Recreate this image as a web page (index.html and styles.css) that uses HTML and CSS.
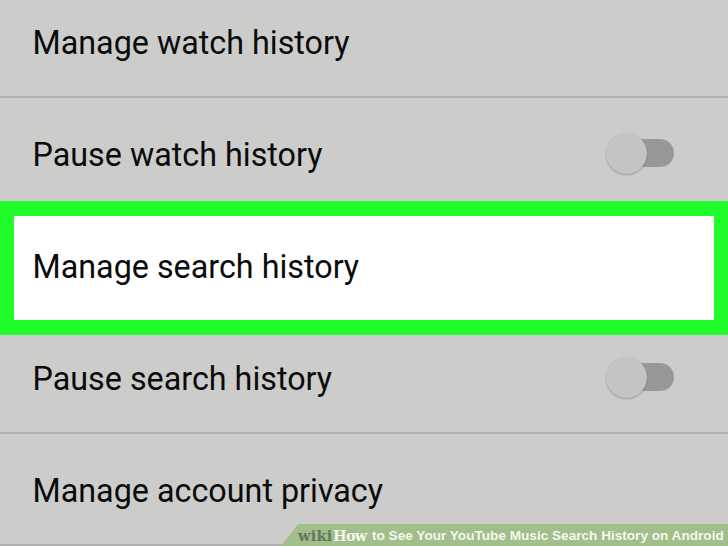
FILE: index.html
```html
<!DOCTYPE html>
<html lang="en">
<head>
    <meta charset="UTF-8">
    <meta name="viewport" content="width=device-width, initial-scale=1">
    <title>History settings</title>
    <link rel="stylesheet" href="styles.css">
</head>
<body>
    <main class="settings">
        <div class="row row-first"><span class="label">Manage watch history</span></div>
        <div class="row row-pause">
            <span class="label">Pause watch history</span>
            <span class="toggle"><span class="knob"></span></span>
        </div>
        <!-- Highlighted option -->
        <div class="row row-active"><span class="label">Manage search history</span></div>
        <div class="row row-pause-search">
            <span class="label">Pause search history</span>
            <span class="toggle"><span class="knob"></span></span>
        </div>
        <div class="row row-last"><span class="label">Manage account privacy</span></div>
    </main>
    <footer class="caption">
        <span class="wiki">wiki</span><span class="how">How</span>
        <span class="caption-text">to See Your YouTube Music Search History on Android</span>
    </footer>
</body>
</html>
```

FILE: styles.css
```css
body {
    margin: 0;
    height: 546px;
    overflow: hidden;
    position: relative;
    background: #cccccb;
    font-family: Roboto, sans-serif;
    color: #0b0b0b;
}

.row {
    box-sizing: border-box;
    display: flex;
    align-items: flex-start;
    justify-content: space-between;
    padding: 0 54px 0 32.5px;
}

.label {
    font-size: 32.3px;
    line-height: 40px;
    white-space: nowrap;
}

/* Each row sets its own height */
.row-first {
    height: 98px;
    padding-top: 23px;
    border-bottom: 2px solid #b0b0ae;
}

.row-pause {
    height: 103px;
    padding-top: 37px;
}

.row-active {
    height: 134px;
    padding: 31px 19px 0 18.5px;
    border: solid #1ffb2b;
    border-width: 15px 14px;
    background: #fff;
}

.row-pause-search {
    height: 99px;
    padding-top: 24px;
    border-bottom: 2px solid #b0b0ae;
}

.row-last {
    height: 112px;
    padding-top: 37px;
    border-bottom: 2px solid #b0b0ae;
}

/* Switch in the off position */
.toggle {
    width: 60px;
    height: 28px;
    margin-top: 4px;
    border-radius: 14px;
    background: #989898;
}

.knob {
    display: block;
    width: 41px;
    height: 41px;
    margin: -6px 0 0 -8px;
    border-radius: 50%;
    background: #c4c4c4;
    box-shadow: 0 1px 2px rgba(0, 0, 0, 0.25);
}

/* Bar laid over the bottom edge of the list */
.caption {
    position: absolute;
    right: 0;
    bottom: 0;
    box-sizing: border-box;
    width: 447px;
    height: 22px;
    padding-left: 17px;
    display: flex;
    background: #a0bf8a;
    clip-path: polygon(17px 0, 100% 0, 100% 100%, 0 100%);
    font-family: "Liberation Sans", Arial, sans-serif;
    font-size: 13.6px;
    font-weight: bold;
    line-height: 24px;
    white-space: nowrap;
    color: #f4f8ef;
}

.wiki,
.how {
    font-family: "DejaVu Serif", serif;
    font-size: 14.5px;
    line-height: 23px;
}

.wiki {
    width: 35px;
    letter-spacing: 0.2px;
    color: #66755a;
}

.how {
    width: 34px;
    letter-spacing: -0.8px;
}

.caption-text {
    margin-left: 5px;
}
```
